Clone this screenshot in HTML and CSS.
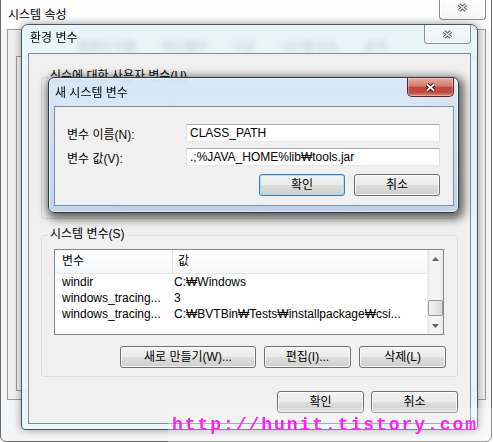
FILE: index.html
```html
<!DOCTYPE html>
<html lang="ko">
<head>
    <meta charset="UTF-8">
    <title>환경 변수</title>
    <link rel="stylesheet" href="styles.css">
</head>
<body>
<div class="desktop">

    <!-- System properties (back window) -->
    <div class="win win-sys">
        <div class="titlebar">
            <span class="title">시스템 속성</span>
            <button class="close close-idle">
                <svg width="11" height="9" viewBox="0 0 11 9"><path d="M2 1.5L9 7.5M9 1.5L2 7.5" stroke="#5b5b5b" stroke-width="3.6"/><path d="M2 1.5L9 7.5M9 1.5L2 7.5" stroke="#f4f4f4" stroke-width="1.5"/></svg>
            </button>
        </div>
        <div class="sys-client">
            <div class="tabs">
                <span>컴퓨터 이름</span><span>하드웨어</span><span>고급</span><span>시스템 보호</span><span>원격</span>
            </div>
            <div class="tab-panel"></div>
        </div>
    </div>

    <!-- Environment variables -->
    <div class="win win-env">
        <div class="titlebar">
            <span class="title">환경 변수</span>
            <button class="close close-idle">
                <svg width="11" height="9" viewBox="0 0 11 9"><path d="M2 1.5L9 7.5M9 1.5L2 7.5" stroke="#5b5b5b" stroke-width="3.6"/><path d="M2 1.5L9 7.5M9 1.5L2 7.5" stroke="#f4f4f4" stroke-width="1.5"/></svg>
            </button>
        </div>
        <div class="env-client">
            <!-- user variables: covered by the dialog -->
            <div class="group">
                <span class="group-label">신슈에 대한 사용자 변수(U)</span>
                <div class="list">
                    <div class="list-body">
                        <div class="list-head"><span class="col-name"></span><span class="col-value"></span></div>
                    </div>
                    <div class="scrollbar">
                        <div class="sb-btn"></div>
                        <div class="sb-fill"></div>
                        <div class="sb-btn"></div>
                    </div>
                </div>
                <div class="btn-row">
                    <button class="btn btn-wide"></button>
                    <button class="btn"></button>
                    <button class="btn"></button>
                </div>
            </div>

            <div class="group group-sys">
                <span class="group-label">시스템 변수(S)</span>
                <div class="list">
                    <div class="list-body">
                        <div class="list-head"><span class="col-name">변수</span><span class="col-value">값</span></div>
                        <div class="row"><span class="col-name">windir</span><span class="col-value">C:₩Windows</span></div>
                        <div class="row"><span class="col-name">windows_tracing...</span><span class="col-value">3</span></div>
                        <div class="row"><span class="col-name">windows_tracing...</span><span class="col-value">C:₩BVTBin₩Tests₩installpackage₩csi...</span></div>
                    </div>
                    <div class="scrollbar">
                        <div class="sb-btn"><svg width="7" height="4" viewBox="0 0 7 4"><path d="M0 4L3.5 0L7 4Z" fill="#5e5e5e"/></svg></div>
                        <div class="sb-gap"></div>
                        <div class="sb-thumb"></div>
                        <div class="sb-fill"></div>
                        <div class="sb-btn"><svg width="7" height="4" viewBox="0 0 7 4"><path d="M0 0L3.5 4L7 0Z" fill="#5e5e5e"/></svg></div>
                    </div>
                </div>
                <div class="btn-row">
                    <button class="btn btn-wide">새로 만들기(W)...</button>
                    <button class="btn">편집(I)...</button>
                    <button class="btn">삭제(L)</button>
                </div>
            </div>

            <div class="dialog-buttons">
                <button class="btn">확인</button>
                <button class="btn">취소</button>
            </div>
        </div>
    </div>

    <!-- New system variable dialog -->
    <div class="win win-new">
        <div class="titlebar">
            <span class="title">새 시스템 변수</span>
            <button class="close close-red">
                <svg width="11" height="9" viewBox="0 0 11 9"><path d="M2 1.5L9 7.5M9 1.5L2 7.5" stroke="#3a1010" stroke-width="3.8"/><path d="M2 1.5L9 7.5M9 1.5L2 7.5" stroke="#ffffff" stroke-width="1.7"/></svg>
            </button>
        </div>
        <div class="new-client">
            <div class="form">
                <label for="var-name">변수 이름(N):</label>
                <input type="text" id="var-name" class="field" value="CLASS_PATH">
                <label for="var-value">변수 값(V):</label>
                <input type="text" id="var-value" class="field" value=".;%JAVA_HOME%lib₩tools.jar">
            </div>
            <div class="new-buttons">
                <button class="btn btn-default">확인</button>
                <button class="btn">취소</button>
            </div>
        </div>
    </div>

    <div class="watermark">http://hunit.tistory.com</div>
</div>
</body>
</html>
```

FILE: styles.css
```css
* {
    box-sizing: border-box;
}

body {
    margin: 0;
    font-family: "Liberation Sans", "Noto Sans CJK KR", sans-serif;
    font-size: 12px;
    color: #000;
    background: #fff;
}

.desktop {
    position: relative;
    width: 493px;
    height: 442px;
    overflow: hidden;
}

/* Windows */
.win {
    position: absolute;
    display: flex;
    flex-direction: column;
}

.titlebar {
    display: flex;
    justify-content: space-between;
    align-items: flex-start;
    flex: none;
}

.title {
    line-height: 14px;
    white-space: nowrap;
}

.close {
    display: flex;
    align-items: center;
    justify-content: center;
    padding: 0;
    border-top: none;
}

.close-idle {
    border: 1px solid #8d8d8d;
    border-top: none;
    border-radius: 0 0 4px 4px;
    background: linear-gradient(rgba(255, 255, 255, 0.5), rgba(240, 240, 240, 0.5));
    box-shadow: inset 0 0 0 1px rgba(255, 255, 255, 0.8);
}

.close-red {
    border: 1px solid #5a2320;
    border-top: none;
    border-radius: 0 0 5px 5px;
    background: linear-gradient(#e9aca2 0%, #d8796d 45%, #c4443a 52%, #c34a40 80%, #d88a72 100%);
    box-shadow: inset 0 0 0 1px rgba(255, 255, 255, 0.35);
}

/* System properties */
.win-sys {
    left: 0;
    top: -6px;
    width: 492px;
    height: 448px;
    border: 1px solid #6b6b6b;
    border-radius: 6px;
    background: #f4f5f6;
}

.win-sys .titlebar {
    height: 34px;
    padding-left: 7px;
    background: #fdfdfd;
}

.win-sys .title {
    margin-top: 13px;
}

.win-sys .close {
    width: 47px;
    height: 25px;
    margin-right: 5px;
}

.sys-client {
    display: flex;
    flex-direction: column;
    height: 371px;
    margin: 0 5px 0 6px;
    padding: 8px 8px;
    border: 1px solid #9a9a9a;
    background: #f0f0f0;
}

.tabs {
    display: flex;
    gap: 26px;
    height: 18px;
    padding-left: 61px;
    line-height: 18px;
    color: #334;
}

.tab-panel {
    flex: 1;
    border: 1px solid #9a9a9a;
    background: #f7f7f7;
}

/* Environment variables */
.win-env {
    left: 21px;
    top: 24px;
    width: 457px;
    height: 406px;
    border: 1px solid #4d5660;
    border-radius: 7px 7px 4px 4px;
    background: rgba(228, 247, 252, 0.72);
    backdrop-filter: blur(3px);
    box-shadow: 0 0 8px rgba(0, 0, 0, 0.4);
}

.win-env .titlebar {
    height: 28px;
    padding-left: 8px;
}

.win-env .title {
    margin-top: 6px;
}

.win-env .close {
    width: 47px;
    height: 19px;
    margin-right: 6px;
}

.env-client {
    flex: 1;
    margin: 0 6px 5px;
    padding: 23px 12px 9px;
    border: 1px solid #7f8a95;
    background: #f0f0f0;
}

.group {
    position: relative;
    height: 142px;
    padding: 13px 13px 8px 12px;
    border: 1px solid #d5dfe5;
    border-radius: 3px;
}

.group-sys {
    margin-top: 16px;
}

.group-label {
    position: absolute;
    top: -9px;
    left: 6px;
    padding: 0 2px;
    line-height: 14px;
    background: #f0f0f0;
    white-space: nowrap;
}

/* List view */
.list {
    display: flex;
    height: 86px;
    border: 1px solid #828790;
    background: #fff;
}

.list-body {
    flex: 1;
    overflow: hidden;
}

.list-head {
    display: flex;
    height: 24px;
    line-height: 23px;
    border-bottom: 1px solid #e5e5e5;
    background: linear-gradient(#ffffff, #f6f7f9);
}

.row {
    display: flex;
    height: 16px;
    line-height: 16px;
    white-space: nowrap;
}

.col-name {
    flex: none;
    width: 118px;
    padding-left: 7px;
    overflow: hidden;
}

.list-head .col-name {
    border-right: 1px solid #e5e5e5;
}

.col-value {
    padding-left: 1px;
}

.list-head .col-value {
    padding-left: 5px;
}

.scrollbar {
    display: flex;
    flex-direction: column;
    width: 16px;
    background: linear-gradient(90deg, #e6e6e6, #f4f4f4 25%, #f4f4f4 75%, #e9e9e9);
}

.sb-btn {
    display: flex;
    align-items: center;
    justify-content: center;
    height: 17px;
}

.sb-gap {
    height: 33px;
}

.sb-thumb {
    height: 16px;
    margin: 0 0 0 1px;
    border: 1px solid #979797;
    border-radius: 2px;
    background: linear-gradient(90deg, #f4f4f4, #e8e8e8 50%, #d9d9d9);
}

.sb-fill {
    flex: 1;
}

/* Buttons */
.btn {
    height: 22px;
    width: 87px;
    padding: 0;
    border: 1px solid #707070;
    border-radius: 3px;
    background: linear-gradient(#f2f2f2, #ebebeb 48%, #dddddd 52%, #cfcfcf);
    box-shadow: inset 0 0 0 1px rgba(255, 255, 255, 0.75);
    font: inherit;
    line-height: 20px;
    color: #000;
}

.btn-wide {
    width: 136px;
}

.btn-default {
    border-color: #3c7fb1;
    box-shadow: inset 0 0 0 1px #a9dcf6;
}

.btn-row {
    display: flex;
    justify-content: flex-end;
    gap: 8px;
    margin: 11px -2px 0 0;
}

.dialog-buttons {
    display: flex;
    justify-content: flex-end;
    gap: 7px;
    margin-top: 14px;
}

/* New system variable */
.win-new {
    left: 48px;
    top: 77px;
    width: 411px;
    height: 136px;
    border: 1px solid #2e3944;
    border-radius: 6px;
    background: linear-gradient(rgba(214, 231, 247, 0.86), rgba(184, 209, 234, 0.88));
    backdrop-filter: blur(3px);
    box-shadow: inset 0 0 0 1px rgba(255, 255, 255, 0.55), 2px 3px 10px 3px rgba(0, 0, 0, 0.6);
}

.win-new .titlebar {
    height: 28px;
    padding-left: 6px;
}

.win-new .title {
    margin-top: 8px;
}

.win-new .close {
    width: 47px;
    height: 19px;
    margin-right: 4px;
}

.new-client {
    flex: 1;
    margin: 0 4px 6px 5px;
    padding: 17px 13px 9px 12px;
    border: 1px solid #7d8fa2;
    background: #f0f0f0;
}

.form {
    display: grid;
    grid-template-columns: 119px 1fr;
    row-gap: 6px;
    align-items: center;
}

.field {
    height: 18px;
    padding: 0 3px;
    border: 1px solid;
    border-color: #abadb3 #dbdfe6 #e3e9ef #e2e3ea;
    font: inherit;
    line-height: 16px;
    background: #fff;
    outline: none;
}

.new-buttons {
    display: flex;
    justify-content: flex-end;
    gap: 9px;
    margin-top: 8px;
}

.new-buttons .btn {
    width: 86px;
}

/* Blog watermark */
.watermark {
    position: absolute;
    right: 0;
    bottom: 0;
    width: 325px;
    height: 34px;
    padding-left: 4px;
    background: rgba(255, 255, 255, 0.3);
    font-family: "Liberation Mono", monospace;
    font-weight: bold;
    font-size: 18px;
    letter-spacing: 1.95px;
    line-height: 34px;
    color: #ff1eff;
    white-space: nowrap;
}
```
